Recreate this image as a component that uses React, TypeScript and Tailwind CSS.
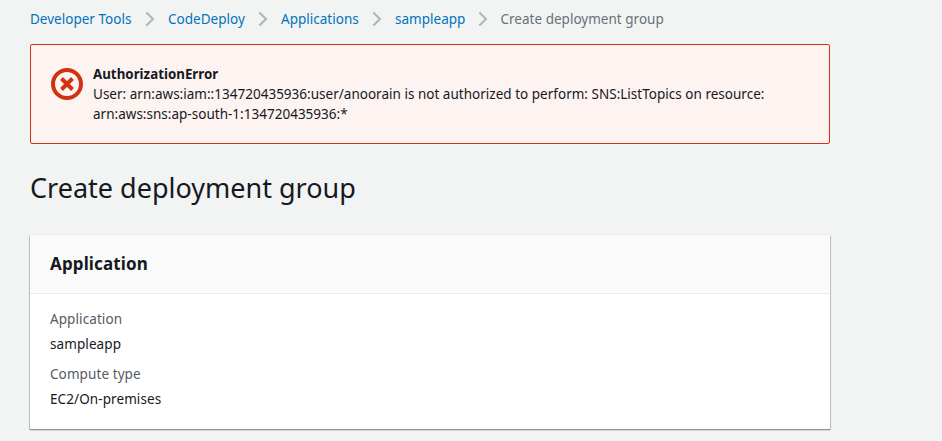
import React from "react";

const trail = [
  { label: "Developer Tools", width: "w-[102px]" },
  { label: "CodeDeploy", width: "w-[77px]" },
  { label: "Applications", width: "w-[78px]" },
  { label: "sampleapp", width: "w-[69.5px]" },
];

function Chevron() {
  return (
    <svg className="mx-3 mt-0.5 h-4 w-3 shrink-0" viewBox="0 0 12 16" fill="none" stroke="#aab7b8" strokeWidth="2">
      <path d="M2.300 1.500 9 8l-6.700 6.500" />
    </svg>
  );
}

function ErrorIcon() {
  return (
    <svg className="mt-1 h-8 w-8 shrink-0" viewBox="0 0 32 32" fill="none" stroke="#d13212" strokeWidth="4">
      <circle cx="16" cy="16" r="14" />
      <path d="m10.500 10.500 11 11m0-11-11 11" />
    </svg>
  );
}

export default function App() {
  return (
    <main className="h-[441px] w-[942px] overflow-hidden bg-[#f2f4f4] pl-[30px] font-['Noto_Sans',sans-serif] text-[13.5px] leading-5 tracking-[0.015px] text-[#16191f]">
      <nav className="flex h-11 items-start pt-[9px]">
        {trail.map((item) => (
          <React.Fragment key={item.label}>
            <a className={`${item.width} whitespace-nowrap text-[#0073bb]`}>{item.label}</a>
            <Chevron />
          </React.Fragment>
        ))}
        <span className="text-[#687078]">Create deployment group</span>
      </nav>
      <section className="flex h-[100px] w-[800px] rounded-[2px] border border-[#d13212] bg-[#fdf3f1] px-5 pt-[19px]">
        <ErrorIcon />
        <div className="ml-[10px] whitespace-nowrap">
          <div className="text-[13.3px] font-bold">AuthorizationError</div>
          <div>User: arn:aws:iam::134720435936:user/anoorain is not authorized to perform: SNS:ListTopics on resource:</div>
          <div>arn:aws:sns:ap-south-1:134720435936:*</div>
        </div>
      </section>
      <h1 className="mt-[26px] text-[27px] leading-9 tracking-normal">Create deployment group</h1>
      <section className="mt-[29px] h-[194px] w-[800px] bg-white shadow-[0_1px_1px_#8f9597,1px_1px_1px_#c9cccd,-1px_1px_1px_#c9cccd,0_-1px_0_#eaeded]">
        <h2 className="h-[59px] border-b border-[#eaeded] bg-[#fafafa] px-5 pt-[18px] text-[17px] font-bold leading-[22px] tracking-[0.13px]">Application</h2>
        <dl className="px-5 pt-[15px] tracking-[0.09px]">
          <dt className="text-[#545b64]">Application</dt>
          <dd className="mt-[5px]">sampleapp</dd>
          <dt className="mt-[10px] text-[#545b64]">Compute type</dt>
          <dd className="mt-[5px]">EC2/On-premises</dd>
        </dl>
      </section>
    </main>
  );
}
